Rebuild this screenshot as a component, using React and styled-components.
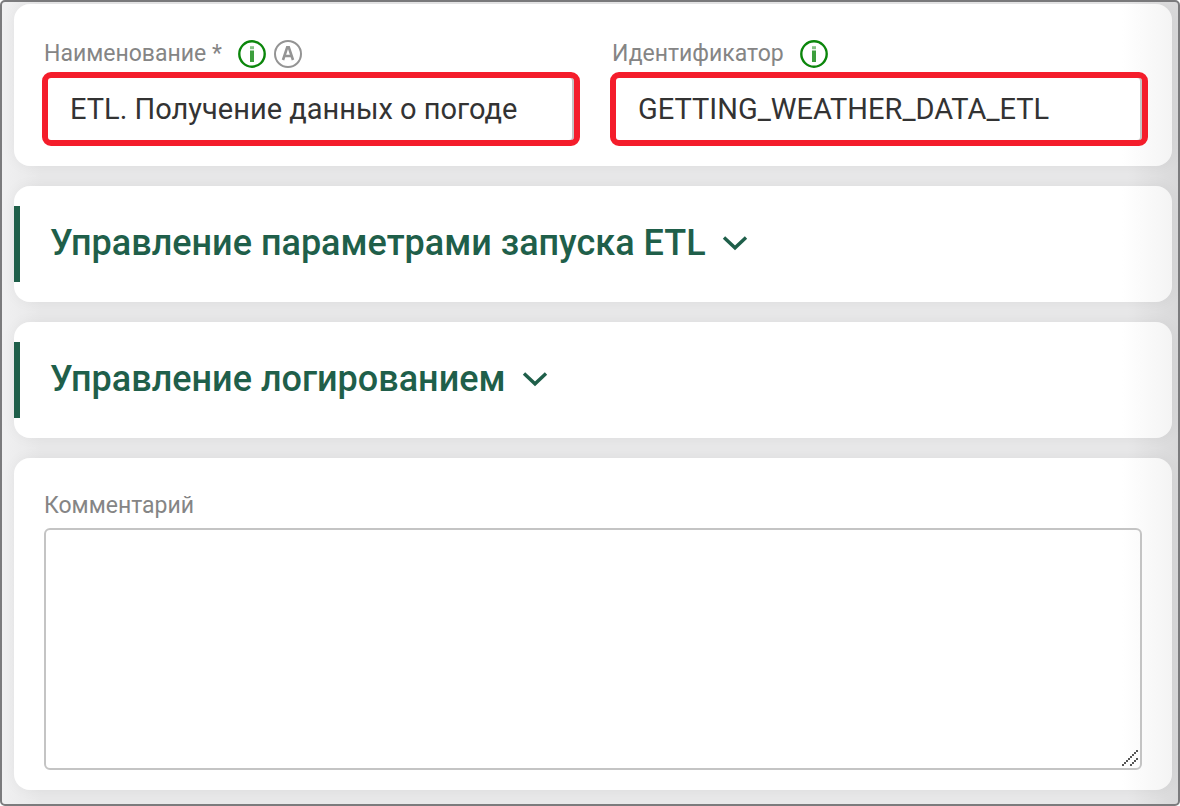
import React from "react";
import styled, { createGlobalStyle } from "styled-components";

const GlobalStyle = createGlobalStyle`
  *, *::before, *::after { box-sizing: border-box; }
  body {
    margin: 0;
    background: #ffffff;
    font-family: Roboto, "Liberation Sans", sans-serif;
  }
`;

const Frame = styled.main`
  display: flex;
  flex-direction: column;
  gap: 20px;
  min-height: 100vh;
  padding: 2px 6px 14px 12px;
  border: 2px solid #7b7b7d;
  border-radius: 5px;
  background: linear-gradient(to right, #f0f0f1 0, #e8e8e9 40px, #e8e8e9 calc(100% - 50px), #d8d8d9 100%);
`;

const Card = styled.section`
  border-radius: 16px;
  background: linear-gradient(to right, #ffffff calc(100% - 50px), #f4f4f4 100%);
  box-shadow: 0 0 14px rgba(0, 0, 0, 0.05);
`;

const FieldsCard = styled(Card)`
  display: grid;
  grid-template-columns: 1fr 1fr;
  gap: 30px;
  padding: 34px 24px 20px 28px;
`;

const CommentCard = styled(Card)`
  padding: 32px 30px 20px;
`;

const Field = styled.div`
  display: flex;
  flex-direction: column;
  gap: 2px;
  min-width: 0;
`;

const LabelRow = styled.div`
  display: flex;
  align-items: center;
  gap: 8px;
  height: 32px;
  padding-left: 2px;
`;

const Label = styled.label`
  margin-right: 8px;
  color: #858585;
  font-size: 23px;
  line-height: 32px;
`;

const TextInput = styled.input`
  width: 100%;
  height: 74px;
  padding: 0 22px;
  border: 6px solid #f41d2b;
  border-radius: 9px;
  outline: none;
  background: #ffffff;
  box-shadow: inset -2px 0 0 #c4c4c4;
  color: #333333;
  font-family: inherit;
  font-size: 29px;
`;

const IconButton = styled.button`
  display: flex;
  padding: 0;
  border: 0;
  background: none;
  color: ${({ $color }) => $color};
  cursor: pointer;

  svg { width: 28px; height: 28px; }
`;

const SectionCard = styled(Card)`
  padding: 20px 0;
`;

const SectionHeading = styled.h2`
  margin: 0;
  border-left: 6px solid #1f5f4a;
`;

const SectionToggle = styled.button`
  display: flex;
  align-items: center;
  gap: 16px;
  width: 100%;
  height: 76px;
  padding: 0 30px 2px;
  border: 0;
  background: none;
  color: #1f5f4a;
  font-family: inherit;
  font-size: 36px;
  font-weight: 500;
  line-height: 40px;
  text-align: left;
  cursor: pointer;

  svg { width: 26px; height: 16px; flex: none; }
`;

const CommentLabel = styled(Label)`
  display: block;
  margin: 0 0 6px;
`;

const CommentBox = styled.div`
  position: relative;

  svg {
    position: absolute;
    right: 2px;
    bottom: 2px;
    width: 20px;
    height: 20px;
    pointer-events: none;
  }
`;

const CommentArea = styled.textarea`
  display: block;
  width: 100%;
  height: 242px;
  padding: 16px 24px;
  border: 2px solid #c4c4c4;
  border-radius: 6px;
  outline: none;
  resize: none;
  background: transparent;
  color: #333333;
  font-family: inherit;
  font-size: 29px;
`;

function InfoButton() {
  return (
    <IconButton type="button" aria-label="Информация" $color="#0b860b">
      <svg viewBox="0 0 28 28" fill="none" stroke="currentColor" aria-hidden="true">
        <circle cx="14" cy="14" r="12.7" strokeWidth="2.4" />
        <path d="M14 10.5V22" strokeWidth="4" opacity=".8" />
        <path d="M14 6.2V9.2" strokeWidth="4" opacity=".5" />
      </svg>
    </IconButton>
  );
}

function AutoButton() {
  return (
    <IconButton type="button" aria-label="Автозаполнение" $color="#949494">
      <svg viewBox="0 0 28 28" fill="none" stroke="currentColor" aria-hidden="true">
        <circle cx="14" cy="14" r="13" strokeWidth="2" />
        <path d="M9 20L13.2 7.4H14.8L19 20M10.6 16H17.4" strokeWidth="2.6" />
      </svg>
    </IconButton>
  );
}

function ResizeGrip() {
  const squares = [
    ...Array.from({ length: 8 }, (_, i) => [2 + 2 * i, 16 - 2 * i]),
    ...Array.from({ length: 4 }, (_, i) => [10 + 2 * i, 16 - 2 * i]),
  ];
  return (
    <svg viewBox="0 0 20 20" fill="#555555" shapeRendering="crispEdges" aria-hidden="true">
      {squares.map(([x, y]) => (
        <rect key={`${x}-${y}`} x={x} y={y} width="2" height="2" />
      ))}
    </svg>
  );
}

function Section({ title }) {
  return (
    <SectionCard>
      <SectionHeading>
        <SectionToggle type="button" aria-expanded="false">
          {title}
          <svg viewBox="0 0 26 16" fill="none" stroke="currentColor" strokeWidth="3.4" aria-hidden="true">
            <path d="M2 2.5L13 12.8L24 2.5" />
          </svg>
        </SectionToggle>
      </SectionHeading>
    </SectionCard>
  );
}

export default function App() {
  return (
    <>
      <GlobalStyle />
      <Frame>
        <FieldsCard>
          <Field>
            <LabelRow>
              <Label htmlFor="name">Наименование *</Label>
              <InfoButton />
              <AutoButton />
            </LabelRow>
            <TextInput id="name" defaultValue="ETL. Получение данных о погоде" />
          </Field>
          <Field>
            <LabelRow>
              <Label htmlFor="identifier">Идентификатор</Label>
              <InfoButton />
            </LabelRow>
            <TextInput id="identifier" defaultValue="GETTING_WEATHER_DATA_ETL" />
          </Field>
        </FieldsCard>
        <Section title="Управление параметрами запуска ETL" />
        <Section title="Управление логированием" />
        <CommentCard>
          <CommentLabel htmlFor="comment">Комментарий</CommentLabel>
          <CommentBox>
            <CommentArea id="comment" />
            <ResizeGrip />
          </CommentBox>
        </CommentCard>
      </Frame>
    </>
  );
}
